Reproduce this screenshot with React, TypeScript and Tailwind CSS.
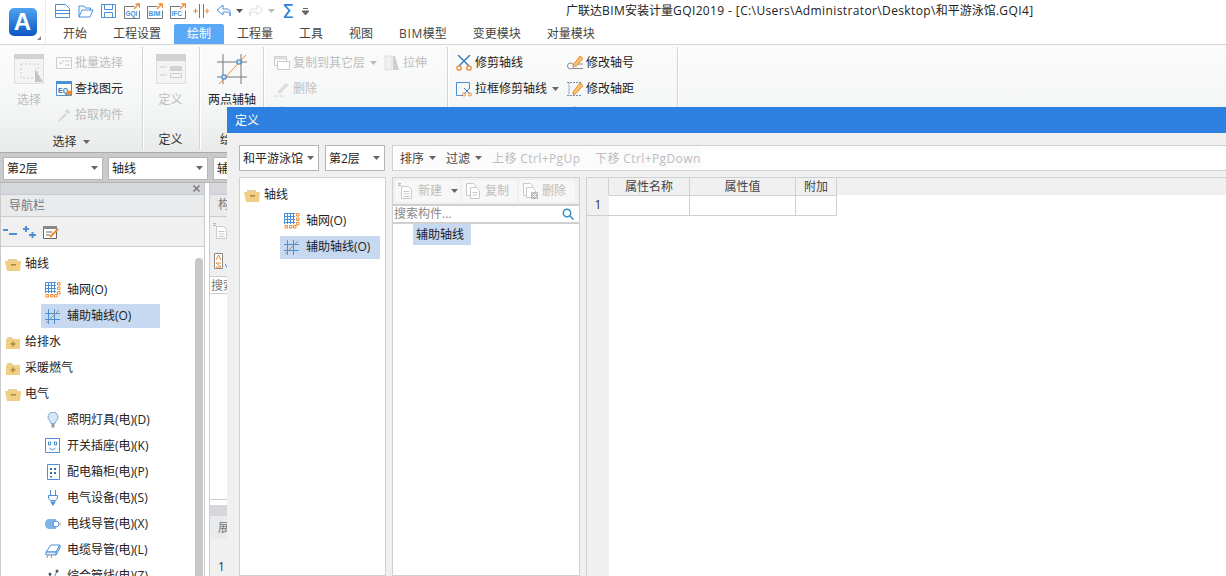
import React from 'react';

const Caret = ({ c = '#666' }: { c?: string }) => (
  <svg width="7" height="4" viewBox="0 0 7 4" className="shrink-0"><path d="M0 0h7L3.5 4z" fill={c} /></svg>
);

const Ic = ({ s = 16, children }: { s?: number; children: React.ReactNode }) => (
  <svg width={s} height={s} viewBox={`0 0 ${s} ${s}`} fill="none" className="shrink-0">{children}</svg>
);

const B = '#4a90d9';
const O = '#ef8a2e';
const G = '#c9c9c9';

const DocIcon = () => <Ic><path d="M.5 1.5h10l4 4v9H.5z" stroke={B} fill="#fff" /><path d="M.5 7.5h14M.5 10.500h14" stroke={B} /></Ic>;
const FolderOpenIcon = () => <Ic><path d="M1 14V3h5l1.5 2h5v2.500" stroke={B} /><path d="M1 14l3-7h11l-3 7z" stroke={B} /></Ic>;
const SaveIcon = () => <Ic><path d="M.5 1.500h14v13H.5z" stroke={B} /><path d="M3.500 1.500v5h8v-5M3.500 14.500v-5h8v5" stroke={B} /></Ic>;

const Qa = ({ label }: { label: string }) => (
  <svg width="16" height="16" viewBox="0 0 16 16" fill="none" className="shrink-0">
    <path d="M.5 3.500h10M.5 3.500v12h15v-8" stroke="#777" />
    <path d="M10 6l5-5M11.500 1H15.500V5" stroke={O} strokeWidth="1.300" />
    <text x="1.500" y="13" fontSize="6.500" fontWeight="700" fill={B} fontFamily="Liberation Sans">{label}</text>
  </svg>
);

const GridIcon = () => (
  <Ic s={16}>
    <path d="M.5 0v11M3.500 0v11M6.500 0v11M9.500 0v11M0 .5h11M0 3.500h11M0 6.500h11M0 9.500h11" stroke={B} />
    <path d="M12.500 .5h2.500v2.500h-2.500zM12.500 5h2.500v2.500h-2.500zM12.500 9.500h2.500v2.500h-2.500zM1 12.500h2.500v2.500H1zM5.500 12.500h2.500v2.500H5.500zM9.500 12.500h2.500v2.500H9.500z" stroke={O} />
  </Ic>
);
const AuxIcon = () => (
  <Ic s={15}>
    <path d="M3.500 0v15M9.500 0v15M0 4.500h15M0 10.500h15" stroke={B} />
    <path d="M1 14L14 1" stroke="#a08a70" />
  </Ic>
);
const FolderO = () => (
  <svg width="16" height="13" viewBox="0 0 16 13" className="shrink-0">
    <path d="M3 1h9v2H3z" fill="#e8d09a" />
    <path d="M0 3h15l1 1-1 9H2z" fill="#f0cf85" />
    <path d="M6 6h5v1.600H6z" fill="#b08a3e" />
  </svg>
);
const FolderC = () => (
  <svg width="14" height="13" viewBox="0 0 14 13" className="shrink-0">
    <path d="M1 1h5l1 2h6v1H1z" fill="#e8d09a" />
    <path d="M0 3h14v10H0z" fill="#f0cf85" />
    <path d="M6.200 5.500h1.600v1.700h1.700v1.600H7.800v1.700H6.200V8.800H4.500V7.200h1.700z" fill="#b08a3e" />
  </svg>
);
const Bulb = () => <Ic><path d="M8 0a5 5 0 0 1 3 9l-1 2.500H6L5 9A5 5 0 0 1 8 0z" fill="#d6e6f7" stroke="#7fa8d4" /><path d="M6.500 12h3v3.500h-3z" fill="#999" /></Ic>;
const Socket = () => <Ic><path d="M.5 .5h14v14H.5z" stroke={B} fill="#fff" /><path d="M3.500 4h2v3h-2zM9.500 4h2v3h-2zM4.500 10l3 2 3-2" stroke={B} /></Ic>;
const Cabinet = () => <Ic><path d="M2.500 .5h12v15h-12z" stroke={B} fill="#fff" /><path d="M5 4h2v2H5zM9 4h2v2H9zM5 8h2v2H5zM9 8h2v2H9zM5 12h2v1.500H5z" fill="#2f6fb5" /></Ic>;
const Plug = () => <Ic><path d="M5.500 0v5M10.500 0v5M3.500 5.500h9v2.500l-2 2.500h-5l-2-2.500z" stroke={B} fill="#fff" /><path d="M5 11.500h6L8 16z" fill={B} /></Ic>;
const Conduit = () => <Ic><path d="M4 3h7v10H4a4 5 0 0 1 0-10z" fill="#7db4ea" /><path d="M13 8h3" stroke={O} /><circle cx="11" cy="8" r="3" fill="#fff" stroke={B} /></Ic>;
const Cable = () => <Ic><path d="M1 10l5-7h9l-4 7z" fill="#fff" stroke={B} /><path d="M1 10h10v3H1zM11 10l4-7v3l-4 7" stroke={B} fill="#dbe9f8" /><path d="M3 13l-1 3M7 13l-1 3" stroke={O} /></Ic>;
const Mixed = () => <Ic><path d="M2 14l3-7 3 5 4-9" stroke={B} /><circle cx="12" cy="3" r="1.500" fill="#555" /><circle cx="5" cy="6" r="1.500" fill="#555" /></Ic>;

const Sc = () => (
  <Ic><path d="M2 0l11 11M14 0L3 11" stroke="#3f7fc6" strokeWidth="1.500" /><circle cx="3" cy="13" r="2.200" stroke={O} strokeWidth="1.300" /><circle cx="13" cy="13" r="2.200" stroke={O} strokeWidth="1.300" /></Ic>
);
const ScBox = () => (
  <Ic><path d="M7 14.500H.5v-13h13V8" stroke={B} /><path d="M8 7l6 6M14 7l-6 6" stroke="#3f7fc6" /><circle cx="8" cy="13.500" r="1.500" stroke={O} /><circle cx="14" cy="13.500" r="1.500" stroke={O} /></Ic>
);
const Pen = () => (
  <Ic><circle cx="3.500" cy="11" r="3" stroke="#888" /><path d="M7 9h9M6 13.500h10" stroke="#888" /><path d="M6 10l7-9 3 2.500-7 8z" fill="#f5c36f" stroke={O} /></Ic>
);
const PenGrid = () => (
  <Ic><path d="M0 1.500h14M0 14.500h14M2 1.500v13" stroke="#6e8fb5" strokeDasharray="2 1" /><path d="M6 11l7-9 3 2.500-7 8-3 1z" fill="#f5c36f" stroke={O} /></Ic>
);

const L = ({ children }: { children: React.ReactNode }) => <span className="tracking-[0.38px]">{children}</span>;

const Tab = ({ label, active }: { label: React.ReactNode; active?: boolean }) => (
  <div className={`h-[20px] px-[13px] flex items-center text-[12px] rounded-t-[2px] ${active ? 'bg-[#5aa9f6] text-white' : 'text-[#444]'}`}>{label}</div>
);

const RibbonDiv = () => <div className="w-px self-stretch my-[2px] bg-[#d4d6d6] border-r border-white box-content" />;

const SmallBtn = ({ icon, label, dis }: { icon: React.ReactNode; label: string; dis?: boolean }) => (
  <div className={`h-[26px] flex items-center gap-[3px] text-[12px] whitespace-nowrap ${dis ? 'text-[#bdbdbd]' : 'text-[#222]'}`}>
    {icon}
    <span>{label}</span>
  </div>
);

const NavItem = ({ icon, label, sel }: { icon: React.ReactNode; label: string; sel?: boolean }) => (
  <div className="h-[26px] flex items-center pl-[41px]">
    <div className={`h-[24px] flex items-center ${sel ? 'bg-[#c7d9f1] w-[119px]' : ''}`}>
      <div className="w-[26px] flex justify-center pr-[3px]">{icon}</div>
      <span className="text-[12px] text-[#222] whitespace-nowrap">{label}</span>
    </div>
  </div>
);

const NavGroup = ({ open, label }: { open?: boolean; label: string }) => (
  <div className={`h-[26px] flex items-center ${open ? 'pl-[5px] gap-[4px]' : 'pl-[6px] gap-[5px]'}`}>
    {open ? <FolderO /> : <FolderC />}
    <span className="text-[12px] text-[#222]">{label}</span>
  </div>
);

const Select = ({ label, w, h }: { label: string; w: string; h: string }) => (
  <div className={`bg-white border border-[#b5b5b5] flex items-center justify-between pl-[3px] pr-[4px] text-[12px] text-[#222] shrink-0 ${h} ${w}`}>
    <span className="whitespace-nowrap overflow-hidden pt-[2px]">{label}</span>
    <Caret />
  </div>
);

const DlgBtn = ({ label, caret, dis, w }: { label: string; caret?: boolean; dis?: boolean; w?: string }) => (
  <div className={`h-[21px] pl-[5px] flex items-center gap-[5px] rounded-[2px] bg-[#fbfbfb] text-[12px] whitespace-nowrap ${w ?? 'pr-[5px]'} ${dis ? 'text-[#bdbdbd] tracking-[0.4px]' : 'text-[#444]'}`}>
    <span className="pt-[2px]">{label}</span>
    {caret && <Caret />}
  </div>
);

const ToolBtn = ({ label, icon, w, caret }: { label: string; icon: React.ReactNode; w: string; caret?: boolean }) => (
  <div className={`h-[22px] pl-[3px] flex items-center gap-[4px] rounded-[2px] bg-[#f7f7f7] text-[12px] text-[#bdbdbd] ${w}`}>
    {icon}
    <span>{label}</span>
    {caret && <span className="ml-[5px]"><Caret /></span>}
  </div>
);

const NewDoc = () => <Ic><path d="M3.500 3.500h7l3 3v9h-10z" stroke={G} fill="#fff" /><path d="M5.500 8.500h6M5.500 11h6M5.500 13.500h6" stroke={G} /><path d="M0 0l3 3M3 0L0 3M1.500 0v3" stroke="#bbb" /></Ic>;
const CopyDoc = () => <Ic><path d="M1.500 .5h7l2 2v10h-9z" stroke={G} fill="#fff" /><path d="M5.500 4.500h6l3 3v8h-9z" stroke={G} fill="#fff" /><path d="M7.500 9.500h5M7.500 12h5" stroke={G} /></Ic>;
const DelDoc = () => <Ic><path d="M1.500 .5h7l2 2v10h-9z" stroke={G} fill="#fff" /><path d="M4.500 4.500h6l3 3v7h-9z" stroke={G} fill="#fff" /><path d="M9 9h7v7H9z" fill="#bbb" /><path d="M10.500 10.500l4 4M14.500 10.500l-4 4" stroke="#fff" /></Ic>;

export default function App() {
  return (
    <div className="relative w-[1226px] h-[576px] overflow-hidden bg-white flex flex-col" style={{ fontFamily: '"Open Sans", "Noto Sans CJK SC", "Liberation Sans", sans-serif' }}>
      {/* title & tabs */}
      <div className="h-[45px] shrink-0 flex border-b border-[#d5d5d5]">
        <div className="relative w-[46px] shrink-0 flex items-center justify-center border-r border-[#ececec] mr-[4px]">
          <div className="w-[28px] h-[28px] rounded-[5px] bg-gradient-to-b from-[#4fa3ee] to-[#0c57c4] flex items-center justify-center text-white font-bold text-[24px] leading-none" style={{ fontFamily: '"Liberation Sans", sans-serif' }}>A</div>
          <svg width="4" height="4" viewBox="0 0 4 4" className="absolute left-[37px] top-[36px]"><path d="M4 0v4H0z" fill="#888" /></svg>
        </div>
        <div className="flex-1 flex flex-col min-w-0">
          <div className="h-[24px] pb-[2px] flex items-center relative pl-[5px] gap-[7px]">
            <DocIcon /><FolderOpenIcon /><SaveIcon />
            <Qa label="GQI" /><Qa label="BIM" /><Qa label="IFC" />
            <Ic><path d="M6.500 1v14M10.500 1v14" stroke="#777" /><path d="M0 8h5M2.500 5.500v5M12 8h4M14 5.500v5" stroke={O} /></Ic>
            <Ic><path d="M7 2L1 7l6 5V9h4c2 0 3 1 3 4 1-4 0-7-3-7H7z" stroke={B} /></Ic>
            <span className="-ml-[3px] -mr-[2px]"><Caret c="#555" /></span>
            <Ic><path d="M9 2l6 5-6 5V9H5c-2 0-3 1-3 4-1-4 0-7 3-7h4z" stroke="#ddd" /></Ic>
            <span className="-ml-[3px]"><Caret c="#bbb" /></span>
            <span className="text-[19px] leading-none text-[#2f7fd6]" style={{ fontFamily: '"DejaVu Sans", sans-serif' }}>Σ</span>
            <span className="ml-[1px]"><svg width="7" height="7" viewBox="0 0 7 7"><path d="M1 .5h5M0 3h7L3.500 7z" stroke="#666" fill="#666" /></svg></span>
            <div className="absolute left-[516px] top-[2px] text-[12px] text-[#222] whitespace-nowrap">广联达<L>BIM</L>安装计量<L>GQI2019 - [C:\Users\Administrator\Desktop\</L>和平游泳馆<L>.GQI4]</L></div>
          </div>
          <div className="flex">
            {['开始', '工程设置'].map(t => <Tab key={t} label={t} />)}
            <Tab label="绘制" active />
            {['工程量', '工具', '视图'].map(t => <Tab key={t} label={t} />)}
            <Tab label={<span><span className="tracking-[0.6px]">BIM</span>模型</span>} />
            {['变更模块', '对量模块'].map(t => <Tab key={t} label={t} />)}
          </div>
        </div>
      </div>

      {/* ribbon */}
      <div className="h-[108px] shrink-0 flex bg-gradient-to-b from-[#fbfbfb] via-[#f6f7f7] to-[#e9ebeb] border-b border-[#a9abab]">
        <div className="w-[142px] flex flex-col shrink-0">
          <div className="flex-1 flex pt-[9px]">
            <div className="w-[56px] pl-[2px] flex flex-col items-center shrink-0">
              <svg width="30" height="30" viewBox="0 0 30 30"><path d="M.5 .5h29v29H.5z" fill="#f4f4f4" stroke="#ddd" /><path d="M0 0h30v5H0z" fill="#d2d2d2" /><path d="M7 10h17v14H7z" fill="none" stroke="#ccc" strokeDasharray="2 2" /><path d="M21 15l8 13h-8z" fill="#c4c4c4" /></svg>
              <span className="text-[12px] text-[#bdbdbd] mt-[7px]">选择</span>
            </div>
            <div className="flex flex-col -mt-[4px]">
              <SmallBtn dis label="批量选择" icon={<Ic><path d="M.5 2.500h15v11H.5z" stroke="#ccc" /><path d="M3 7l2 2 3-4M9 6h5M9 10h5" stroke="#ccc" /></Ic>} />
              <SmallBtn label="查找图元" icon={<Ic><path d="M.5 1.500h15v13H.5z" stroke={B} fill="#fff" /><path d="M0 0h16v3H0z" fill={B} /><text x="2" y="11.500" fontSize="7" fontWeight="700" fill="#2f6fb5" fontFamily="Liberation Sans">EQ</text><circle cx="13" cy="12" r="2.500" fill={O} /></Ic>} />
              <SmallBtn dis label="拾取构件" icon={<Ic><path d="M2 14l7-8 2 2-8 7zM9 4l2-2 3 3-2 2z" fill="#d5d5d5" /></Ic>} />
            </div>
          </div>
          <div className="h-[25px] pt-[3px] flex items-center justify-center gap-[6px] text-[12px] text-[#333]">选择 <Caret /></div>
        </div>
        <RibbonDiv />
        <div className="w-[55px] flex flex-col items-center shrink-0 pt-[9px] pr-[2px]">
          <svg width="30" height="30" viewBox="0 0 30 30"><path d="M.5 .5h29v29H.5z" fill="#f4f4f4" stroke="#ddd" /><path d="M0 0h30v7H0z" fill="#d2d2d2" /><path d="M4 13h7M4 21h7" stroke="#ccc" /><path d="M14 12h12v5H14z" fill="#d2d2d2" /><path d="M14.500 19.500h11v4h-11z" stroke="#ccc" fill="none" /></svg>
          <span className="text-[12px] text-[#bdbdbd] mt-[7px]">定义</span>
          <span className="text-[12px] text-[#333] mt-[22px]">定义</span>
        </div>
        <RibbonDiv />
        <div className="w-[62px] flex flex-col items-center shrink-0 pt-[9px]">
          <svg width="30" height="30" viewBox="0 0 30 30" fill="none"><path d="M6 0v30M24 0v30M0 8h30M0 23h30" stroke="#777" /><path d="M2 30L29 1" stroke={O} /><path d="M20 6h4v4h-4zM5 21h4v4H5z" fill="#cfe3f7" stroke="#2f7fc6" /></svg>
          <span className="text-[12px] text-[#222] mt-[7px] whitespace-nowrap">两点辅轴</span>
          <span className="text-[12px] text-[#333] mt-[22px] whitespace-nowrap">绘图</span>
        </div>
        <RibbonDiv />
        <div className="w-[182px] shrink-0 pl-[9px] pt-[5px] flex flex-col">
          <div className="flex items-center gap-[7px]">
            <div className="flex items-center gap-[5px]">
              <SmallBtn dis label="复制到其它层" icon={<Ic><path d="M.5 1.500h12v9H.5z" stroke={G} fill="#fff" /><path d="M.5 1.500h12v3H.5z" fill="#ddd" /><path d="M3.500 6.500h12v8h-12z" stroke={G} fill="#fff" /></Ic>} />
              <Caret c="#bbb" />
            </div>
            <SmallBtn dis label="拉伸" icon={<Ic><path d="M1 1h7v14H1z" fill="#f0f0f0" stroke="#ddd" /><path d="M9 1h2l4 14H9z" fill="#d0d0d0" /></Ic>} />
          </div>
          <SmallBtn dis label="删除" icon={<Ic><path d="M3 11l9-9 3 2-9 9z" fill="#ddd" /><path d="M0 15h10" stroke="#ccc" strokeDasharray="2 1" /></Ic>} />
          <div className="pt-[4px]"><Ic><circle cx="8" cy="6" r="5" stroke="#ccc" /></Ic></div>
        </div>
        <RibbonDiv />
        <div className="w-[228px] shrink-0 pl-[7px] pt-[5px] grid grid-cols-[111px_1fr] content-start">
          <SmallBtn label="修剪轴线" icon={<Sc />} />
          <SmallBtn label="修改轴号" icon={<Pen />} />
          <div className="flex items-center gap-[5px]"><SmallBtn label="拉框修剪轴线" icon={<ScBox />} /><Caret /></div>
          <SmallBtn label="修改轴距" icon={<PenGrid />} />
          <div className="pt-[4px]" />
          <div className="pt-[4px]"><Ic><circle cx="8" cy="6" r="5" stroke="#aaa" /></Ic></div>
        </div>
        <RibbonDiv />
      </div>

      {/* property selector bar */}
      <div className="h-[30px] shrink-0 bg-[#c9cbcb] flex items-center pl-[3px] pt-[1px] gap-[5px] border-b border-[#b3b5b5]">
        <Select label="第2层" w="w-[100px]" h="h-[23px]" />
        <Select label="轴线" w="w-[100px]" h="h-[23px]" />
        <Select label="辅助轴线" w="w-[100px]" h="h-[23px]" />
      </div>

      {/* body */}
      <div className="flex-1 min-h-0 flex">
        <div className="w-[205px] shrink-0 border-x border-[#c9cbcb] flex flex-col">
          <div className="h-[11px] bg-[#d5d7db] flex items-center justify-end pr-[4px]">
            <svg width="7" height="7" viewBox="0 0 7 7"><path d="M.5 .5l6 6M6.500 .5l-6 6" stroke="#777" strokeWidth="1.400" /></svg>
          </div>
          <div className="h-[23px] bg-[#e9eaeb] border-y border-[#c9ccd2] flex items-center pl-[8px] text-[12px] text-[#777]">导航栏</div>
          <div className="h-[30px] bg-[#f0f0f0] border-b border-[#c9ccd2] flex items-center pl-[2px] gap-[6px]">
            <Ic s={14}><path d="M0 5h5M6 9h8" stroke={B} strokeWidth="2" /></Ic>
            <Ic s={14}><path d="M0 4h6M3 1v6M6 10h7M9.500 7v6" stroke={B} strokeWidth="2" /></Ic>
            <Ic><path d="M.5 2.500h13v12H.5z" stroke="#666" fill="#fff" /><path d="M0 2h14v3H0z" fill="#888" /><path d="M3 8h6M3 11h4" stroke="#666" /><path d="M7 13l8-8" stroke={O} strokeWidth="2" /></Ic>
          </div>
          <div className="relative flex-1 overflow-hidden pt-[4px] -ml-px">
            <div className="absolute right-[1px] top-[11px] bottom-0 w-[8px] bg-[#c8c8c8] rounded-t-[4px]" />
            <NavGroup open label="轴线" />
            <NavItem icon={<GridIcon />} label="轴网(O)" />
            <NavItem icon={<AuxIcon />} label="辅助轴线(O)" sel />
            <NavGroup label="给排水" />
            <NavGroup label="采暖燃气" />
            <NavGroup open label="电气" />
            <NavItem icon={<Bulb />} label="照明灯具(电)(D)" />
            <NavItem icon={<Socket />} label="开关插座(电)(K)" />
            <NavItem icon={<Cabinet />} label="配电箱柜(电)(P)" />
            <NavItem icon={<Plug />} label="电气设备(电)(S)" />
            <NavItem icon={<Conduit />} label="电线导管(电)(X)" />
            <NavItem icon={<Cable />} label="电缆导管(电)(L)" />
            <NavItem icon={<Mixed />} label="综合管线(电)(Z)" />
          </div>
        </div>
        {/* panel behind dialog */}
        <div className="ml-[4px] flex-1 min-w-0 border-l border-[#c9ccd2] flex flex-col text-[12px] text-[#777]">
          <div className="h-[11px] bg-[#d5d7db]" />
          <div className="h-[23px] bg-[#e9eaeb] border-y border-[#c9ccd2] flex items-center pl-[8px] whitespace-nowrap overflow-hidden">构件列表</div>
          <div className="h-[30px] bg-[#f0f0f0] flex items-center pl-[3px]"><NewDoc /></div>
          <div className="h-[30px] bg-[#f0f0f0] flex items-center pl-[4px]">
            <svg width="10" height="16" viewBox="0 0 10 16" fill="none" className="shrink-0"><path d="M.5 .5h8v15h-8z" stroke="#888" fill="#fff" /><path d="M2 7l2.500-5L7 7M2 14h5l-5-4h5" stroke={O} /></svg>
            <svg width="5" height="14" viewBox="0 0 5 14" className="shrink-0 ml-[1px]"><path d="M2.500 0v12M0 10l2.500 4L5 10" stroke={B} fill="none" /></svg>
          </div>
          <div className="h-[18px] bg-white border-y border-[#c9ccd2] pl-[1px] leading-[17px] whitespace-nowrap overflow-hidden">搜索构件</div>
          <div className="h-[209px] border-b border-[#c9ccd2]" />
          <div className="h-[11px] mt-[5px] bg-[#d5d7db]" />
          <div className="h-[23px] bg-[#e9eaeb] pl-[8px] leading-[23px] whitespace-nowrap overflow-hidden">展开</div>
          <div className="flex-1 bg-[#f0f0f0] pt-[19px] pl-[8px] text-[#333]">1</div>
        </div>
      </div>

      {/* dialog */}
      <div className="absolute left-[227px] top-[107px] right-0 bottom-0 bg-[#f0f0f0] flex flex-col">
        <div className="h-[26px] shrink-0 bg-[#2d7fe0] flex items-center pl-[8px] pt-[2px] text-[12px] text-white">定义</div>
        <div className="h-[44px] shrink-0 flex items-start pl-[12px] pt-[12px]">
          <div className="mr-[6px]"><Select label="和平游泳馆" w="w-[80px]" h="h-[26px]" /></div>
          <Select label="第2层" w="w-[60px]" h="h-[26px]" />
          <div className="ml-[7px] flex-1 h-[26px] bg-white border-y border-[#cfd0d4] border-l flex items-center gap-[1px] pl-[2px]">
            <DlgBtn label="排序" caret w="w-[45px]" />
            <DlgBtn label="过滤" caret w="w-[45px]" />
            <DlgBtn label="上移 Ctrl+PgUp" dis w="w-[102px]" />
            <DlgBtn label="下移 Ctrl+PgDown" dis w="w-[112px]" />
          </div>
        </div>
        <div className="flex-1 min-h-0 flex pl-[12px]">
          <div className="w-[147px] shrink-0 bg-white border border-[#cfd0d4] pt-[4px]">
            <div className="h-[26px] flex items-center pl-[4px] gap-[4px] text-[12px] text-[#222]"><FolderO />轴线</div>
            <div className="h-[26px] pl-[40px] flex items-center"><div className="flex items-center"><div className="w-[26px] flex justify-center pr-[3px]"><GridIcon /></div><span className="text-[12px] text-[#222]">轴网(O)</span></div></div>
            <div className="h-[26px] pl-[40px] flex items-center"><div className="w-[100px] h-[23px] bg-[#c7d9f1] flex items-center"><div className="w-[26px] flex justify-center pr-[3px]"><AuxIcon /></div><span className="text-[12px] text-[#222] whitespace-nowrap">辅助轴线(O)</span></div></div>
          </div>
          <div className="w-[188px] ml-[6px] shrink-0 flex flex-col bg-white border border-[#cfd0d4]">
            <div className="h-[26px] bg-[#f0f0f0] flex items-center gap-[2px] pl-[2px]">
              <ToolBtn label="新建" caret icon={<NewDoc />} w="w-[65px]" />
              <ToolBtn label="复制" icon={<CopyDoc />} w="w-[55px]" />
              <ToolBtn label="删除" icon={<DelDoc />} w="w-[56px]" />
            </div>
            <div className="h-[20px] border-y-2 border-[#d0d0d0] flex items-center justify-between pl-[1px] pr-[5px] text-[12px] text-[#888]">
              <span>搜索构件...</span>
              <svg width="12" height="12" viewBox="0 0 12 12" fill="none"><circle cx="5" cy="5" r="3.700" stroke="#2f8fc6" strokeWidth="1.500" /><path d="M8 8l3.500 3.500" stroke="#2f8fc6" strokeWidth="1.500" /></svg>
            </div>
            <div className="pl-[20px]"><div className="w-[58px] h-[21px] bg-[#c7d9f1] text-[12px] text-[#222] flex items-center pl-[3px]">辅助轴线</div></div>
          </div>
          <div className="ml-[6px] flex-1 min-w-0 border-l border-t border-[#cfd0d4] bg-[#f0f0f0] flex flex-col">
            <div className="flex h-[17px] text-[12px] text-[#444] items-center">
              <div className="w-[22px] h-full border-r border-[#d0d0d0]" />
              <div className="w-[81px] h-full flex items-center justify-center border-r border-[#d0d0d0]">属性名称</div>
              <div className="w-[106px] h-full flex items-center justify-center border-r border-[#d0d0d0]">属性值</div>
              <div className="w-[41px] h-full flex items-center justify-center border-r border-[#d0d0d0]">附加</div>
            </div>
            <div className="flex h-[21px] text-[12px] items-stretch">
              <div className="w-[22px] flex items-center justify-center text-[#333] border-b border-[#d0d0d0]">1</div>
              <div className="w-[81px] bg-white border border-l-0 border-[#d0d0d0]" />
              <div className="w-[106px] bg-white border-y border-r border-[#d0d0d0]" />
              <div className="w-[41px] bg-white border-y border-r border-[#d0d0d0]" />
              <div className="flex-1 bg-white" />
            </div>
            <div className="flex-1 ml-[22px] bg-white" />
          </div>
        </div>
      </div>
    </div>
  );
}
